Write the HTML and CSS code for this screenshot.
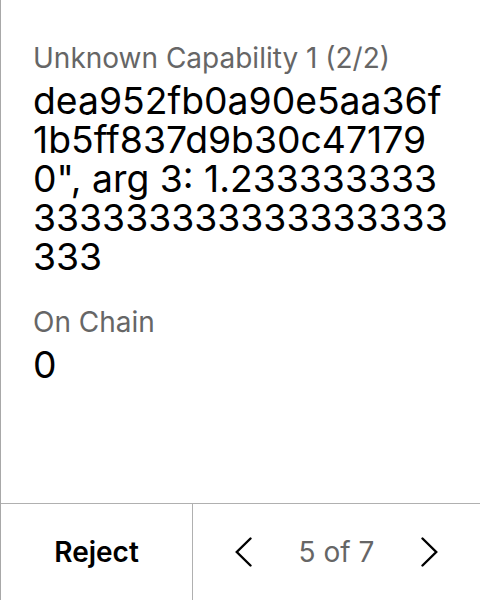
FILE: index.html
```html
<!DOCTYPE html>
<html>
<head>
<meta charset="utf-8">
<link rel="stylesheet" href="styles.css">
</head>
<body>
<div class="screen">
  <div class="content">
    <div class="field">
      <div class="label">Unknown Capability 1 (2/2)</div>
      <div class="value">dea952fb0a90e5aa36f1b5ff837d9b30c471790", arg 3: 1.233333333333333333333333333333</div>
    </div>
    <div class="field">
      <div class="label">On Chain</div>
      <div class="value">0</div>
    </div>
  </div>
  <div class="footer">
    <button class="reject">Reject</button>
    <div class="pager">
      <svg class="chev" width="17" height="30" viewBox="0 0 17 30"><path d="M15.5 1.5 L1.8 15 L15.5 28.5" fill="none" stroke="#000" stroke-width="2.4" stroke-linecap="round"/></svg>
      <span class="count">5 of 7</span>
      <svg class="chev" width="17" height="30" viewBox="0 0 17 30"><path d="M1.5 1.5 L15.2 15 L1.5 28.5" fill="none" stroke="#000" stroke-width="2.4" stroke-linecap="round"/></svg>
    </div>
  </div>
</div>
</body>
</html>
```
FILE: styles.css
```css
html, body {
  margin: 0;
  padding: 0;
  background: #fff;
}
body {
  font-family: Inter, "Noto Sans", sans-serif;
  color: #000;
}
.screen {
  width: 480px;
  height: 600px;
  box-sizing: border-box;
  border-left: 1px solid #a8a8a8;
  display: flex;
  flex-direction: column;
}
.content {
  flex: 1;
  padding: 41px 32px 0 32px;
  display: flex;
  flex-direction: column;
  gap: 29px;
}
.field {
  display: flex;
  flex-direction: column;
  gap: 6px;
}
.label {
  font-size: 28px;
  line-height: 34px;
  color: #666;
}
.value {
  font-size: 37.3px;
  line-height: 39px;
  word-break: break-all;
}
.footer {
  height: 96px;
  border-top: 1px solid #b0b0b0;
  display: flex;
}
.reject {
  width: 192px;
  border: none;
  border-right: 1px solid #b0b0b0;
  background: none;
  font-family: inherit;
  font-size: 28px;
  font-weight: 600;
  color: #000;
  padding: 0;
}
.pager {
  flex: 1;
  display: flex;
  align-items: center;
  justify-content: center;
  gap: 47px;
}
.count {
  font-size: 28px;
  color: #666;
}
```
